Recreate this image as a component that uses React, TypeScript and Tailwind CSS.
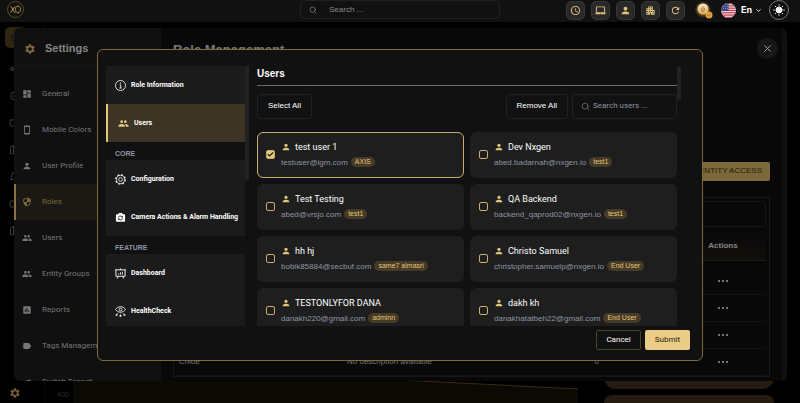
import type { ReactNode } from "react";
import type { IconType } from "react-icons";
import {
  MdAccessTime,
  MdApartment,
  MdAssessment,
  MdDashboard,
  MdLabel,
  MdLaptopMac,
  MdPeople,
  MdPerson,
  MdRefresh,
  MdSecurity,
  MdSettings,
  MdSmartphone,
  MdSwapHoriz,
} from "react-icons/md";
import { Bell, Check, ChevronDown, Map, Search, Settings, Share2, Video, X } from "lucide-react";

type User = { name: string; email: string; role: string; picked?: boolean };

const USERS: User[] = [
  { name: "test user 1", email: "testuser@igm.com", role: "AXIS", picked: true },
  { name: "Dev Nxgen", email: "abed.badarnah@nxgen.io", role: "test1" },
  { name: "Test Testing", email: "abed@vrsjo.com", role: "test1" },
  { name: "QA Backend", email: "backend_qaprod02@nxgen.io", role: "test1" },
  { name: "hh hj", email: "bobik85884@secbuf.com", role: "same7 almasri" },
  { name: "Christo Samuel", email: "christopher.samuelp@nxgen.io", role: "End User" },
  { name: "TESTONLYFOR DANA", email: "danakh220@gmail.com", role: "adminn" },
  { name: "dakh kh", email: "danakhatatbeh22@gmail.com", role: "End User" },
];

const SETTINGS_MENU: { label: string; icon: IconType; active?: boolean }[] = [
  { label: "General", icon: MdDashboard },
  { label: "Mobile Colors", icon: MdSmartphone },
  { label: "User Profile", icon: MdPerson },
  { label: "Roles", icon: MdSecurity, active: true },
  { label: "Users", icon: MdPeople },
  { label: "Entity Groups", icon: MdPeople },
  { label: "Reports", icon: MdAssessment },
  { label: "Tags Management", icon: MdLabel },
  { label: "Switch Tenant", icon: MdSwapHoriz },
];

const TOOLS: { label: string; icon: IconType }[] = [
  { label: "History", icon: MdAccessTime },
  { label: "Device", icon: MdLaptopMac },
  { label: "Account", icon: MdPerson },
  { label: "Sites", icon: MdApartment },
  { label: "Reload", icon: MdRefresh },
];

function Logo() {
  return (
    <svg viewBox="0 0 34 34" className="size-[17px]" fill="none" stroke="#c9a44a">
      <circle cx="17" cy="17" r="16" strokeWidth="1.2" stroke="#8a7035" />
      <path d="M7 11c4 0 5 12 10 12M16 11c-3 2-6 11-9 12" strokeWidth="2" />
      <path d="M22 10c-4 0-5 4-5 7s2 7 5 7 5-4 5-7-2-7-5-7z" strokeWidth="1.8" />
    </svg>
  );
}

function Flag() {
  return (
    <svg viewBox="0 0 30 30" className="size-[15px] rounded-full">
      <rect width="30" height="30" fill="#e9e3e6" />
      {[0, 4.6, 9.2, 13.8, 18.4, 23, 27.6].map((y) => (
        <rect key={y} y={y} width="30" height="2.3" fill="#c5304a" />
      ))}
      <rect width="15" height="16" fill="#39477f" />
      {[3, 7, 11].map((y) => (
        <path key={y} d={`M4 ${y}h1.5M8 ${y}h1.5M12 ${y}h1.5`} stroke="#c9cfe6" strokeWidth="1.3" />
      ))}
    </svg>
  );
}

function Medal() {
  return (
    <svg viewBox="0 0 40 40" className="size-5">
      <defs>
        <radialGradient id="glow">
          <stop offset="0.4" stopColor="#d9932f" stopOpacity="0.7" />
          <stop offset="1" stopColor="#d9932f" stopOpacity="0" />
        </radialGradient>
        <linearGradient id="coin" x2="0" y2="1">
          <stop stopColor="#f6ead0" />
          <stop offset="1" stopColor="#dba854" />
        </linearGradient>
      </defs>
      <circle cx="18" cy="19" r="17" fill="url(#glow)" />
      <circle cx="18" cy="18" r="11" fill="url(#coin)" />
      <path d="M18 12v12M15 16v5c0 3 6 3 6 0v-5" stroke="#a8772e" strokeWidth="1.5" fill="none" />
      <circle cx="30" cy="30" r="7" fill="#e0a13c" />
      <path d="M27 30l2 2 4-4" stroke="#8a5a18" strokeWidth="1.5" fill="none" />
    </svg>
  );
}

function Sun() {
  return (
    <svg viewBox="0 0 24 24" className="size-3" stroke="#fff" strokeWidth="2" strokeLinecap="round">
      <circle cx="12" cy="12" r="6" fill="#fff" />
      <path d="M12 1.5v1M12 21.5v1M1.5 12h1M21.5 12h1M4.6 4.6l.7.7M18.7 18.7l.7.7M4.6 19.4l.7-.7M18.7 5.3l.7-.7" />
    </svg>
  );
}

function InfoRing() {
  return (
    <svg viewBox="0 0 24 24" className="size-[11px] shrink-0" fill="none" stroke="#fff">
      <circle cx="12" cy="12" r="11" strokeWidth="1.8" />
      <path d="M10 10.5H12.5V17.5M9.5 17.5h5.5" strokeWidth="1.8" />
      <circle cx="12" cy="6.8" r="1.4" fill="#fff" stroke="none" />
    </svg>
  );
}

function GearRing() {
  return (
    <svg viewBox="0 0 24 24" className="size-[11px] shrink-0" fill="none" stroke="#fff">
      <circle cx="12" cy="12" r="10.4" strokeWidth="2.6" strokeDasharray="4.2 3.968" />
      <circle cx="12" cy="12" r="8.8" strokeWidth="1.6" />
      <circle cx="12" cy="12" r="4" strokeWidth="1.8" />
    </svg>
  );
}

function CameraSync() {
  return (
    <svg viewBox="0 0 24 24" className="size-[11px] shrink-0" fill="none">
      <path d="M8.5 2h7l1.5 3h3a2 2 0 0 1 2 2v12a2 2 0 0 1-2 2H4a2 2 0 0 1-2-2V7a2 2 0 0 1 2-2h3z" fill="#fff" />
      <path d="M7 12.5c.6-4 6-5 8.5-2M17 13.5c-.6 4-6 5-8.5 2" stroke="#1b1b1b" strokeWidth="1.8" />
      <path d="M17.5 8v4h-4zM6.5 18v-4h4z" fill="#1b1b1b" />
    </svg>
  );
}

function Board() {
  return (
    <svg viewBox="0 0 24 24" className="size-[11px] shrink-0" fill="none" stroke="#fff" strokeWidth="2">
      <path d="M0 4h24M2 4v14h20V4M12 1v3M7 18l-2 5M17 18l2 5" />
      <path d="M8 14.5v-3M12 14.5V9.5M16 14.5V8" strokeWidth="1.8" />
    </svg>
  );
}

function HealthEye() {
  return (
    <svg viewBox="0 0 24 24" className="size-[11px] shrink-0" fill="none" stroke="#fff" strokeWidth="1.8">
      <path d="M1 7.5c5-8 17-8 22 0-5 8-17 8-22 0z" />
      <circle cx="12" cy="7.5" r="3" />
      <path d="M12 16.5v2M6 15l-1.5 2M18 15l1.5 2" />
      <path d="M10 21.5h4M1.5 19.5h4M18.5 19.5h4" strokeWidth="3.5" />
    </svg>
  );
}

function TopBar() {
  return (
    <header className="flex h-[22px] shrink-0 items-start bg-[#111111] px-[7px]">
      <div className="flex-1 pt-px">
        <Logo />
      </div>
      <label className="flex h-[19px] w-[200px] items-center gap-3 rounded border border-[#1f1f1f] px-2 text-[#8b8b8b]">
        <Search className="size-2 shrink-0" />
        <input aria-label="Search" placeholder="Search ..." className="w-full bg-transparent text-[8px] outline-none placeholder:text-[#8b8b8b]" />
      </label>
      <div className="flex flex-1 items-center justify-end">
        <div className="flex gap-[6px]">
          {TOOLS.map(({ label, icon: Icon }) => (
            <button key={label} aria-label={label} className="grid size-[19px] place-items-center rounded-[5px] border border-[#363636] bg-[#292929] text-[#e3c57b]">
              <Icon className="size-[11px]" />
            </button>
          ))}
        </div>
        <div className="ml-[9px]">
          <Medal />
        </div>
        <div className="ml-[7px]">
          <Flag />
        </div>
        <button className="ml-[5px] flex items-center gap-[3px] font-[Inter,sans-serif] text-[9px] font-bold text-white">
          En
          <ChevronDown className="size-[7px]" strokeWidth={3} />
        </button>
        <button aria-label="Theme" className="mr-1 ml-[7px] grid size-5 place-items-center rounded-full border border-[#777]">
          <Sun />
        </button>
      </div>
    </header>
  );
}

function Dashboard() {
  return (
    <div className="flex min-h-0 flex-1">
      <nav className="flex w-[45px] flex-col items-start gap-[15px] border-r border-[#0a0a0a] pt-[5px] pl-[5px] text-[#3c3c3c]">
        <span className="grid size-[21px] place-items-center rounded-[5px] bg-[#2d2614]">
          <Video className="size-[10px] text-[#0c0a05]" />
        </span>
        {[Share2, Settings, Video, Map, Bell, Video, Map].map((Icon, i) => (
          <Icon key={i} className="ml-1 size-3" />
        ))}
        <span className="mt-auto mb-1 ml-1">
          <MdSettings className="size-3 text-[#6e5c33]" />
        </span>
      </nav>
      <div className="flex flex-1 items-end justify-between pr-[26px]">
        <div className="flex h-[27px] w-[533px] items-end gap-1 pl-3 text-[7px] leading-4 text-[#2c2c2c]">
          400
          <svg viewBox="0 0 505 27" preserveAspectRatio="none" className="h-full min-w-0 flex-1">
            <path d="M0 0H245L505 13V27H0z" fill="#0b0904" />
            <path d="M200 0H245L505 13" fill="none" stroke="#392d13" />
          </svg>
        </div>
        <div className="flex w-[170px] flex-col gap-[6px]">
          <div className="h-5 rounded-b-xl bg-[#241c10]" />
          <div className="h-2 rounded-t-lg bg-[#241c10]" />
        </div>
      </div>
    </div>
  );
}

function RolesTable() {
  return (
    <div className="mt-4 border border-[#171717] px-[3px] pt-[3px]">
      <input aria-label="Search roles" className="block h-[26px] w-full rounded border border-[#171717] bg-transparent" />
      <table className="mt-[6px] w-full table-fixed text-left text-[8px] text-[#777]">
        <thead>
          <tr className="h-7 border-b border-[#1c1c1c] bg-gradient-to-b from-[#090909] to-[#120f0c]">
            <th className="w-[170px]" />
            <th />
            <th />
            <th className="w-[86px] text-center font-bold text-[#858585]">Actions</th>
          </tr>
        </thead>
        <tbody>
          <tr className="h-[7px]" />
          {["", "", "", "Chloe"].map((role, i) => (
            <tr key={i} className="h-[27px] border-b border-[#121212]">
              <td className="pl-[2px]">{role}</td>
              <td>{role && "No description available"}</td>
              <td className="text-center">{role && "0"}</td>
              <td>
                <button aria-label="Row actions" className="mx-auto flex gap-[2px]">
                  <i className="size-[2px] rounded-full bg-[#999]" />
                  <i className="size-[2px] rounded-full bg-[#999]" />
                  <i className="size-[2px] rounded-full bg-[#999]" />
                </button>
              </td>
            </tr>
          ))}
        </tbody>
      </table>
    </div>
  );
}

function SettingsPanel() {
  return (
    <section className="absolute top-7 right-[13px] bottom-[22px] left-[14px] flex overflow-hidden rounded-md bg-[#080808]">
      <aside className="w-[147px] shrink-0 bg-[#101010]">
        <h2 className="flex h-[38px] items-center gap-[9px] border-b border-[#171717] pt-1 pl-[10px] text-[11px] font-bold text-[#858585]">
          <MdSettings className="size-3 text-[#7d6839]" />
          Settings
        </h2>
        <nav className="pt-[10px] font-[Roboto,sans-serif]">
          {SETTINGS_MENU.map(({ label, icon: Icon, active }) => (
            <a
              key={label}
              href="#"
              className={
                "flex h-9 items-center gap-[10px] border-l-2 pl-[6px] text-[8px] whitespace-nowrap " +
                (active ? "border-[#8a7340] bg-[#1c1914] text-[#7d6839]" : "border-transparent text-[#777]")
              }
            >
              <Icon className="size-[10px] shrink-0" />
              {label}
            </a>
          ))}
        </nav>
      </aside>
      <div className="min-w-0 flex-1 px-3">
        <div className="flex items-center justify-between pt-[9px]">
          <h1 className="pt-[3px] text-[13px] font-bold text-[#777]">Role Management</h1>
          <button aria-label="Close" className="-mr-2 grid size-[21px] place-items-center rounded-full bg-[#171717] text-[#aaa]">
            <X className="size-[11px]" />
          </button>
        </div>
        <div className="mt-[102px] flex justify-end">
          <button className="h-[19px] rounded-xs bg-[#7d6839] px-2 text-[8px] text-[#221c10]">ADD ENTITY ACCESS</button>
        </div>
        <RolesTable />
      </div>
      <div className="w-[5px] bg-[#101010]" />
    </section>
  );
}

function NavItem({ icon, active, children }: { icon: ReactNode; active?: boolean; children: ReactNode }) {
  return (
    <button
      className={
        "flex h-[38px] w-full items-center gap-[5px] pt-[2px] text-left font-[Roboto,sans-serif] text-[7px] font-bold whitespace-nowrap text-white " +
        (active ? "border-l-2 border-[#e3c57b] bg-[#3d3426] pl-[10px]" : "bg-[#1b1b1b] pl-[9px]")
      }
    >
      {icon}
      {children}
    </button>
  );
}

function NavLabel({ children }: { children: ReactNode }) {
  return <h4 className="flex h-[18px] items-end pl-[9px] text-[7px] font-bold text-[#8d95a3]">{children}</h4>;
}

function UserCard({ user }: { user: User }) {
  return (
    <label
      className={
        "flex h-[46px] min-w-0 items-center gap-[6px] rounded-md border bg-[#1e1e1e] pl-2 " +
        (user.picked ? "border-[#c9ae6b]" : "border-[#1e1e1e]")
      }
    >
      <span className="relative grid shrink-0 place-items-center">
        <input
          type="checkbox"
          defaultChecked={user.picked}
          className="peer size-[9px] appearance-none rounded-[2px] border border-[#c9ae6b] checked:bg-[#e3c57b]"
        />
        <Check className="absolute hidden size-[7px] text-[#1e1e1e] peer-checked:block" strokeWidth={4} />
      </span>
      <span className="min-w-0">
        <span className="flex items-center gap-[4px] font-[Roboto,sans-serif] text-[9px] leading-[15px] text-white">
          <MdPerson className="size-[10px] text-[#e3c57b]" />
          {user.name}
        </span>
        <span className="flex items-center gap-[3px] text-[8px] leading-[15px] text-[#8d95a3]">
          {user.email}
          <span className="rounded-full bg-[#463b26] px-[4px] text-[7px] leading-[10px] text-[#e3c57b]">{user.role}</span>
        </span>
      </span>
    </label>
  );
}

function UsersDialog() {
  return (
    <div className="absolute inset-0 flex items-center justify-center px-[97px] pt-[6px]">
      <div role="dialog" aria-label="Users" className="flex h-[312px] w-full flex-col rounded-md border border-[#7d6a3c] bg-[#111111] pt-4 pl-2">
        <div className="flex h-[260px] shrink-0 overflow-hidden">
          <nav className="w-[139px] shrink-0">
            <NavItem icon={<InfoRing />}>Role Information</NavItem>
            <NavItem active icon={<MdPeople className="size-[11px] text-[#e3c57b]" />}>Users</NavItem>
            <NavLabel>CORE</NavLabel>
            <NavItem icon={<GearRing />}>Configuration</NavItem>
            <NavItem icon={<CameraSync />}>Camera Actions &amp; Alarm Handling</NavItem>
            <NavLabel>FEATURE</NavLabel>
            <NavItem icon={<Board />}>Dashboard</NavItem>
            <NavItem icon={<HealthEye />}>HealthCheck</NavItem>
          </nav>
          <div className="h-[115px] w-1 shrink-0 rounded-b bg-[#222]" />
          <div className="ml-2 min-w-0 flex-1">
            <h3 className="h-5 border-b border-[#6b6b6b] text-[10px] leading-[15px] font-bold text-white">Users</h3>
            <div className="mt-2 flex gap-1">
              <button className="h-[25px] rounded border border-[#222] px-[10px] text-[8px] text-white">Select All</button>
              <button className="ml-auto h-[25px] rounded border border-[#222] px-[10px] text-[8px] text-white">Remove All</button>
              <label className="flex h-[25px] w-[105px] items-center gap-[3px] rounded border border-[#222] pl-2 text-[#777]">
                <Search className="size-[9px] shrink-0" />
                <input aria-label="Search users" placeholder="Search users ..." className="w-full min-w-0 bg-transparent font-[Roboto,sans-serif] text-[8px] outline-none placeholder:text-[#8d95a3]" />
              </label>
            </div>
            <div className="mt-[13px] grid grid-cols-2 gap-[6px]">
              {USERS.map((user) => (
                <UserCard key={user.email} user={user} />
              ))}
            </div>
          </div>
          <div className="mr-[21px] h-[34px] w-1 shrink-0 rounded bg-[#222]" />
        </div>
        <footer className="flex justify-end gap-1 pt-1 pr-3 font-[Roboto,sans-serif] text-[8px]">
          <button className="h-5 rounded-xs border border-[#4b4029] px-[9px] text-white">Cancel</button>
          <button className="h-5 rounded-xs bg-[#e9cc85] px-[10px] text-[#2a2416]">Submit</button>
        </footer>
      </div>
    </div>
  );
}

export default function App() {
  return (
    <div className="relative flex h-screen flex-col overflow-hidden bg-black font-[Liberation_Sans,Arial,sans-serif]">
      <TopBar />
      <Dashboard />
      <SettingsPanel />
      <UsersDialog />
    </div>
  );
}
